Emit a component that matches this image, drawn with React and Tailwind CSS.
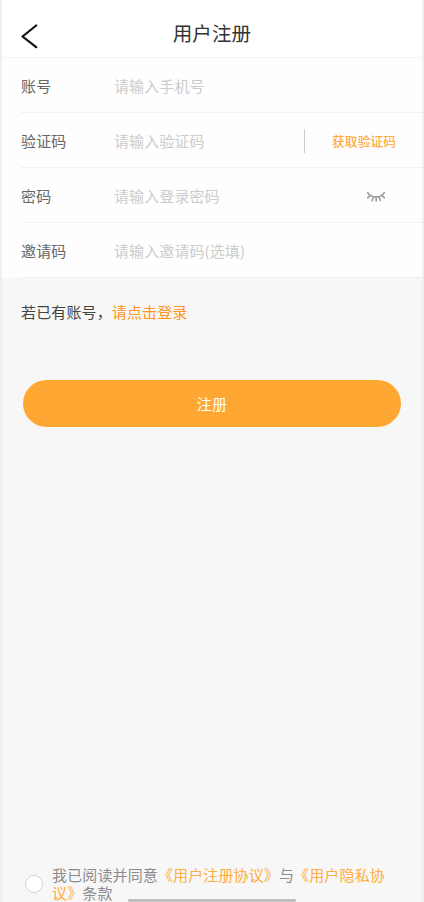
import { useState } from 'react';

const fields = [
  { label: '账号', placeholder: '请输入手机号', type: 'tel' },
  { label: '验证码', placeholder: '请输入验证码', type: 'text', action: 'code' },
  { label: '密码', placeholder: '请输入登录密码', type: 'password', action: 'eye' },
  { label: '邀请码', placeholder: '请输入邀请码(选填)', type: 'text' },
];

function BackIcon() {
  return (
    <svg width="18" height="26" viewBox="0 0 18 26" fill="none" stroke="#111" strokeWidth="2.2" strokeLinecap="round" strokeLinejoin="round">
      <path d="M15.2 2.5 L1.5 13.5 L15.2 24.2" />
    </svg>
  );
}

function ClosedEyeIcon() {
  return (
    <svg width="20" height="12" viewBox="0 0 20 12" fill="none" stroke="#a0a0a0" strokeWidth="1.7" strokeLinecap="round">
      <path d="M1.7 1.6 C5 7.4 15 7.4 18.3 1.6" />
      <path d="M4 4.4 L1.8 6.9 M7.4 6 L6.2 9.6 M10.2 6.2 V10 M13 5.8 L14.4 9.4 M16 4.2 L18.4 6.9" />
    </svg>
  );
}

export default function App() {
  const [agreed, setAgreed] = useState(false);

  return (
    <div className="flex h-[902px] w-[424px] flex-col overflow-hidden border-x-2 border-[#f0f0f0] bg-[#f7f7f7] font-['Noto_Sans_CJK_SC',sans-serif] text-[15px] tracking-[0.13px]">
      {/* Header */}
      <header className="grid h-[58px] shrink-0 grid-cols-[60px_1fr_60px] items-center border-b border-[#f3f3f3] bg-white pt-[9px]">
        <button className="flex pl-[19px] pt-[5px]">
          <BackIcon />
        </button>
        <h1 className="text-center text-[19.5px] leading-7 text-[#333]">用户注册</h1>
      </header>

      {/* Form */}
      <form className="shrink-0 bg-[#fefefe] pl-[19px]">
        {fields.map(({ label, placeholder, type, action }) => (
          <div key={label} className="flex h-[55px] items-center border-b border-[#f0f1f1] pt-[2px]">
            <label className="w-[93px] shrink-0 text-[#666]">{label}</label>
            <input
              type={type}
              placeholder={placeholder}
              className="w-[190px] tracking-[0.1px] outline-none placeholder:text-[#ccc]"
            />
            {action === 'code' && (
              <div className="flex flex-1 items-center">
                <span className="h-6 w-px bg-[#ccc]" />
                <button type="button" className="ml-[27px] text-[12.7px] font-medium text-[#ffac40]">获取验证码</button>
              </div>
            )}
            {action === 'eye' && (
              <button type="button" className="ml-[62px] pt-0.5">
                <ClosedEyeIcon />
              </button>
            )}
          </div>
        ))}
      </form>

      <p className="mt-[22px] pl-[19px] leading-6 text-[#444]">
        若已有账号，<a className="text-[#ff9420]">请点击登录</a>
      </p>

      <button className="mx-[21px] mt-[56px] h-[47px] shrink-0 rounded-full bg-[#ffa733] pt-px text-white">注册</button>

      {/* Agreement */}
      <footer className="relative mt-auto flex h-[36px] shrink-0 pl-[23px]">
        <button
          aria-pressed={agreed}
          onClick={() => setAgreed(!agreed)}
          className={`mt-[9px] size-[18px] shrink-0 rounded-full border border-[#d4d4d4] ${agreed ? 'bg-[#ffa733]' : 'bg-white'}`}
        />
        <p className="ml-[9px] w-[340px] shrink-0 leading-[18px] text-[#8c8c8c]">
          我已阅读并同意<a className="text-[#ffac40]">《用户注册协议》</a>与<a className="text-[#ffac40]">《用户隐私协<br />议》</a>条款
        </p>
        {/* Home indicator */}
        <div className="absolute bottom-0 left-[126px] h-[3px] w-[168px] rounded-full bg-[#bfbfbf]" />
      </footer>
    </div>
  );
}
